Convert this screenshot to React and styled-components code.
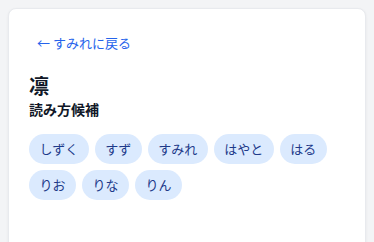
import React from 'react'
import styled, { createGlobalStyle } from 'styled-components'

const GlobalStyle = createGlobalStyle`
  html, body {
    margin: 0;
    background: #f3f4f6;
    font-family: "Noto Sans CJK JP", "Noto Sans", sans-serif;
  }
`

const Page = styled.div`
  padding: 8px;
`

const Card = styled.div`
  background: #fff;
  border: 1px solid #e8eaee;
  border-radius: 8px;
  box-shadow: 0 1px 3px rgba(0, 0, 0, 0.06);
  padding: 20px 20px;
  min-height: 260px;
  box-sizing: border-box;
`

const BackLink = styled.a`
  display: inline-block;
  padding: 4px 8px;
  font-size: 13px;
  line-height: 18px;
  color: #2563eb;
  text-decoration: none;
  cursor: pointer;
`

const Title = styled.h1`
  margin: 17px 0 0;
  font-size: 20px;
  line-height: 26px;
  font-weight: 700;
  color: #111827;
`

const Subtitle = styled.h2`
  margin: 0 0 15px;
  font-size: 14px;
  line-height: 20px;
  font-weight: 700;
  color: #111827;
`

const ChipList = styled.div`
  display: flex;
  flex-wrap: wrap;
  gap: 6px;
`

const Chip = styled.button`
  border: none;
  background: #dbeafe;
  color: #1e3a8a;
  font-family: inherit;
  font-size: 13px;
  line-height: 18px;
  height: 30px;
  padding: 0 10.5px;
  border-radius: 999px;
  cursor: pointer;
`

const readings = ['しずく', 'すず', 'すみれ', 'はやと', 'はる', 'りお', 'りな', 'りん']

export default function App() {
  return (
    <>
      <GlobalStyle />
      <Page>
        <Card>
          <BackLink>← すみれに戻る</BackLink>
          <Title>凛</Title>
          <Subtitle>読み方候補</Subtitle>
          <ChipList>
            {readings.map((r) => (
              <Chip key={r}>{r}</Chip>
            ))}
          </ChipList>
        </Card>
      </Page>
    </>
  )
}
